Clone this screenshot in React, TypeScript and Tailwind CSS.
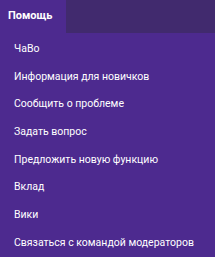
import React from 'react';

const items = [
  'ЧаВо',
  'Информация для новичков',
  'Сообщить о проблеме',
  'Задать вопрос',
  'Предложить новую функцию',
  'Вклад',
  'Вики',
  'Связаться с командой модераторов',
];

const App = () => {
  return (
    <div className="w-[215px] h-[257px] bg-[#4d2a8f] overflow-hidden" style={{ fontFamily: 'Roboto, sans-serif' }}>
      <div className="flex h-[33px] bg-[#412a6e]">
        <div className="w-[66px] bg-[#4d2a8f] flex items-center pl-[8px] text-white text-[11px] font-bold">
          Помощь
        </div>
      </div>
      <ul className="flex flex-col pt-[2px]">
        {items.map((item) => (
          <li key={item} className="h-[27.7px] flex items-center pl-[14px] text-white text-[10.5px] whitespace-nowrap">
            {item}
          </li>
        ))}
      </ul>
    </div>
  );
};

export default App;
